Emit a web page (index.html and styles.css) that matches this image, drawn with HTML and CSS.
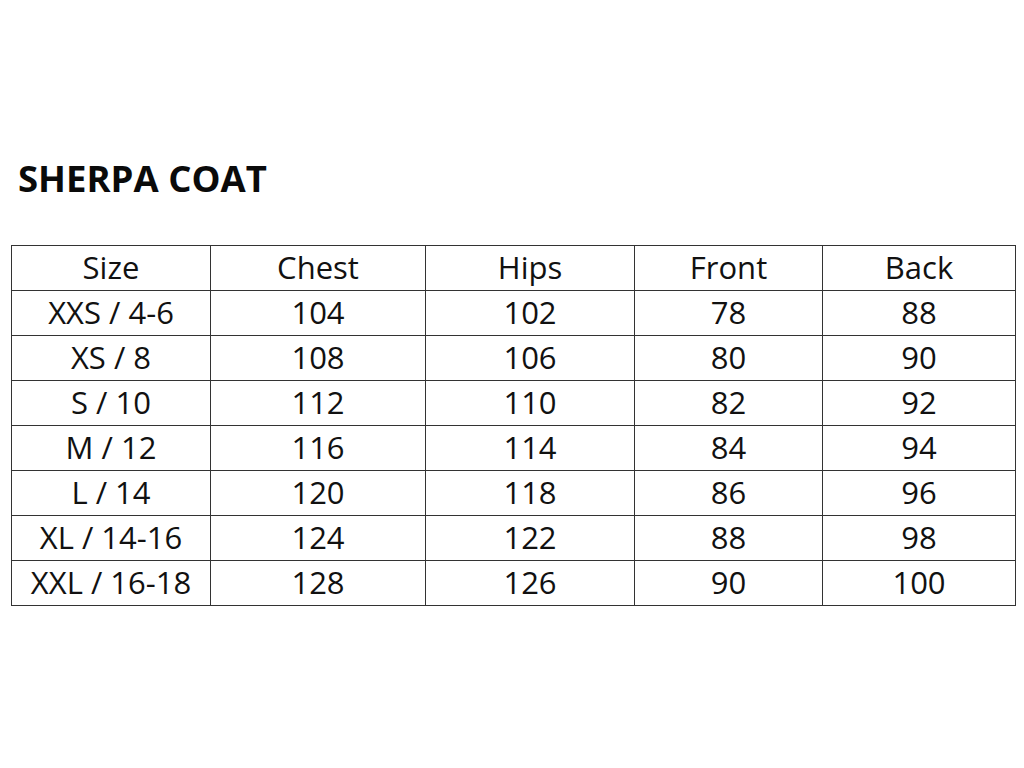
FILE: index.html
```html
<!DOCTYPE html>
<html>
<head>
<meta charset="utf-8">
<link rel="stylesheet" href="styles.css">
</head>
<body>
<div class="page">
  <h1 class="title">SHERPA COAT</h1>
  <table class="sizes">
    <colgroup>
      <col class="c1"><col class="c2"><col class="c3"><col class="c4"><col class="c5">
    </colgroup>
    <tr><td>Size</td><td>Chest</td><td>Hips</td><td>Front</td><td>Back</td></tr>
    <tr><td>XXS / 4-6</td><td>104</td><td>102</td><td>78</td><td>88</td></tr>
    <tr><td>XS / 8</td><td>108</td><td>106</td><td>80</td><td>90</td></tr>
    <tr><td>S / 10</td><td>112</td><td>110</td><td>82</td><td>92</td></tr>
    <tr><td>M / 12</td><td>116</td><td>114</td><td>84</td><td>94</td></tr>
    <tr><td>L / 14</td><td>120</td><td>118</td><td>86</td><td>96</td></tr>
    <tr><td>XL / 14-16</td><td>124</td><td>122</td><td>88</td><td>98</td></tr>
    <tr><td>XXL / 16-18</td><td>128</td><td>126</td><td>90</td><td>100</td></tr>
  </table>
</div>
</body>
</html>
```
FILE: styles.css
```css
html, body {
  margin: 0;
  padding: 0;
  background: #fff;
}
.page {
  width: 1024px;
  height: 768px;
  padding-top: 154px;
  box-sizing: border-box;
  font-family: "Open Sans", "Liberation Sans", sans-serif;
  color: #111;
}
.title {
  margin: 0 0 0 18px;
  font-size: 36.5px;
  font-weight: 700;
  line-height: 48px;
  color: #0a0a0a;
}
.sizes {
  margin: 43px 0 0 11px;
  border-collapse: collapse;
  table-layout: fixed;
  width: 1005px;
}
.c1 { width: 199px; }
.c2 { width: 215px; }
.c3 { width: 209px; }
.c4 { width: 188px; }
.c5 { width: 193px; }
.sizes td {
  border: 1px solid #333;
  height: 44px;
  padding: 0 0 2px;
  box-sizing: border-box;
  text-align: center;
  font-size: 31px;
  line-height: 42px;
  color: #111;
}
.sizes tr:last-child td {
  height: 43px;
}
```
